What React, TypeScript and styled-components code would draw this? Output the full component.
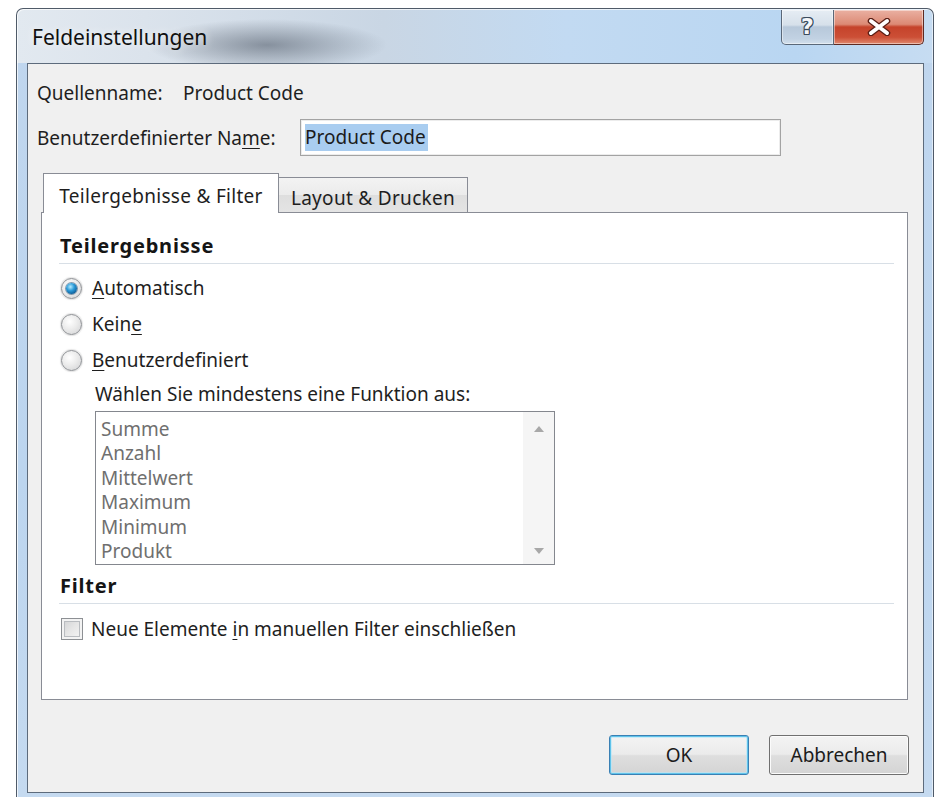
import styled, { createGlobalStyle } from 'styled-components';

const GlobalStyle = createGlobalStyle`
  html, body {
    margin: 0;
    padding: 0;
    background: #ffffff;
  }
  body {
    font-family: 'Noto Sans', 'Open Sans', sans-serif;
    font-size: 19px;
    color: #1e1e1e;
  }
  * {
    box-sizing: border-box;
  }
`;

const Desktop = styled.div`
  width: 936px;
  height: 797px;
  padding: 8px 2px 0 16px;
  overflow: hidden;
  background: #ffffff;
`;

/* Aero-Rahmen mit Glas-Titelleiste */
const Window = styled.div`
  height: 789px;
  display: flex;
  flex-direction: column;
  padding: 0 9px 4px 10px;
  border: 1px solid #4f5a68;
  border-bottom: none;
  border-radius: 7px 7px 0 0;
  background:
    radial-gradient(ellipse 120px 26px at 250px 36px, rgba(84, 94, 108, 0.6), rgba(84, 94, 108, 0)),
    linear-gradient(90deg, #e2e9f0 0%, #dbe3ec 14%, #c9d6e4 40%, #c2daf2 60%, #b9d6f2 85%, #c6dcf2 100%) top / 100% 54px no-repeat,
    linear-gradient(180deg, #c0d6ee 0%, #bcd5ef 60%, #c5daf0 100%);
  box-shadow: inset 1px 1px 0 rgba(255, 255, 255, 0.7), inset -1px 0 0 rgba(255, 255, 255, 0.5);
`;

const TitleBar = styled.div`
  height: 54px;
  display: flex;
  align-items: flex-start;
`;

const Title = styled.div`
  margin-left: 5px;
  padding-top: 15px;
  line-height: 26px;
  font-size: 21px;
  color: #101010;
  text-shadow: 0 0 8px rgba(255, 255, 255, 0.9);
`;

const CaptionButtons = styled.div`
  margin-left: auto;
  margin-top: 1px;
  display: flex;
`;

const CaptionButton = styled.div<{ $close?: boolean }>`
  width: ${(p) => (p.$close ? 90 : 53)}px;
  height: 35px;
  display: flex;
  align-items: center;
  justify-content: center;
  border: 1px solid ${(p) => (p.$close ? '#5e2a22' : '#5a6879')};
  border-top: none;
  border-left-width: ${(p) => (p.$close ? 0 : 1)}px;
  border-radius: ${(p) => (p.$close ? '0 0 5px 0' : '0 0 0 5px')};
  background: ${(p) =>
    p.$close
      ? 'linear-gradient(180deg, #eab0a2 0%, #dc8a75 42%, #c5432b 50%, #cc4f36 80%, #e08a70 100%)'
      : 'linear-gradient(180deg, #e6edf4 0%, #d6e0ea 44%, #b7c8da 50%, #c2d2e3 85%, #d3e0ec 100%)'};
  box-shadow: inset 0 0 0 1px rgba(255, 255, 255, 0.45);
`;

const HelpGlyph = styled.span`
  font-family: 'DejaVu Sans', sans-serif;
  font-weight: bold;
  font-size: 22px;
  line-height: 1;
  color: #f4f6f9;
  text-shadow:
    1px 0 0 #3b4b5e, -1px 0 0 #3b4b5e, 0 1px 0 #3b4b5e, 0 -1px 0 #3b4b5e,
    1px 1px 0 #3b4b5e, -1px -1px 0 #3b4b5e, 1px -1px 0 #3b4b5e, -1px 1px 0 #3b4b5e;
`;

const Client = styled.div`
  flex: 1;
  display: flex;
  flex-direction: column;
  padding: 17px 15px 0 9px;
  background: #f0f0f0;
  border: 1px solid #5d6b7c;
`;

const InfoRow = styled.div`
  display: flex;
  align-items: center;
  line-height: 24px;
`;

const NameRow = styled(InfoRow)`
  margin-top: 14px;
  height: 37px;
`;

const Label = styled.span<{ $width: number }>`
  width: ${(p) => p.$width}px;
  flex-shrink: 0;
  white-space: nowrap;
`;

const Mnemonic = styled.span`
  text-decoration: underline;
  text-underline-offset: 3px;
  text-decoration-thickness: 1px;
`;

const TextBox = styled.div`
  width: 481px;
  height: 37px;
  display: flex;
  align-items: center;
  padding-left: 4px;
  background: #ffffff;
  border: 1px solid #a3a3a3;
  box-shadow: inset 0 0 0 1px #ececec;
`;

const Selection = styled.span`
  height: 27px;
  line-height: 27px;
  padding-right: 2px;
  background: #a9cdf0;
  color: #1b1b1b;
`;

const TabArea = styled.div`
  margin: 17px 0 0 4px;
  display: flex;
  flex-direction: column;
`;

const TabStrip = styled.div`
  height: 39px;
  padding-left: 2px;
  display: flex;
  align-items: flex-end;
`;

const Tab = styled.div<{ $active?: boolean; $width: number }>`
  position: relative;
  z-index: ${(p) => (p.$active ? 1 : 0)};
  width: ${(p) => p.$width}px;
  height: ${(p) => (p.$active ? 40 : 35)}px;
  margin-bottom: ${(p) => (p.$active ? -1 : 0)}px;
  padding-top: ${(p) => (p.$active ? 4 : 5)}px;
  display: flex;
  align-items: center;
  justify-content: center;
  white-space: nowrap;
  letter-spacing: 0.3px;
  border: 1px solid #898c95;
  border-bottom: none;
  border-left-width: ${(p) => (p.$active ? 1 : 0)}px;
  background: ${(p) => (p.$active ? '#ffffff' : 'linear-gradient(180deg, #f3f3f3 0%, #ebebeb 50%, #dedede 51%, #e4e4e4 100%)')};
`;

const Panel = styled.div`
  height: 488px;
  padding: 20px 13px 0 17px;
  background: #ffffff;
  border: 1px solid #898c95;
`;

const Heading = styled.div`
  margin-left: 1px;
  line-height: 26px;
  font-size: 20px;
  font-weight: bold;
  letter-spacing: 0.8px;
  color: #151515;
`;

const Separator = styled.div`
  margin-top: 4px;
  border-top: 1px solid #d8dfe6;
`;

const OptionRow = styled.div`
  height: 36px;
  margin-left: 2px;
  display: flex;
  align-items: center;
  gap: 10px;
`;

const RadioGroup = styled.div`
  margin-top: 6px;
`;

const Radio = styled.span`
  width: 21px;
  height: 21px;
  flex-shrink: 0;
  display: flex;
  align-items: center;
  justify-content: center;
  border-radius: 50%;
  border: 1px solid #8d9094;
  background: radial-gradient(circle at 40% 35%, #ffffff 0%, #ececec 45%, #cfd0d2 100%);
  box-shadow: 0 0 1px 1px rgba(190, 190, 190, 0.4);
`;

const RadioDot = styled.span`
  width: 11px;
  height: 11px;
  border-radius: 50%;
  background: radial-gradient(circle at 40% 35%, #b6ecff 0%, #2b9ad8 40%, #0e5f9a 75%, #0a3f6e 100%);
  box-shadow: 0 0 0 1px rgba(20, 70, 110, 0.5);
`;

const Hint = styled.div`
  margin: 3px 0 0 36px;
  line-height: 26px;
`;

const ListBox = styled.div`
  margin: 4px 0 0 36px;
  width: 460px;
  height: 154px;
  display: flex;
  border: 1px solid #84878e;
  background: #ffffff;
`;

const ListItems = styled.div`
  flex: 1;
  padding: 5px 0 0 5px;
  line-height: 24.4px;
  color: #6f6f6f;
`;

const ScrollTrack = styled.div`
  width: 31px;
  display: flex;
  flex-direction: column;
  justify-content: space-between;
  align-items: center;
  padding: 14px 0 10px;
  background: #f5f5f5;
`;

const FilterHeading = styled(Heading)`
  margin-top: 8px;
`;

const CheckRow = styled(OptionRow)`
  margin-top: 7px;
  gap: 8px;
`;

const CheckBox = styled.span`
  width: 22px;
  height: 22px;
  flex-shrink: 0;
  border: 1px solid #8d9094;
  background: linear-gradient(135deg, #cfd0d2 0%, #e6e6e6 50%, #f6f6f6 100%);
  box-shadow: inset 0 0 0 2px #f3f3f3, inset 0 0 0 3px #b9bcc0;
`;

const ButtonRow = styled.div`
  margin: 35px -1px 0 0;
  display: flex;
  justify-content: flex-end;
  gap: 20px;
`;

const Button = styled.div<{ $default?: boolean }>`
  width: 140px;
  height: 40px;
  display: flex;
  align-items: center;
  justify-content: center;
  border: 1px solid ${(p) => (p.$default ? '#3a80b4' : '#707070')};
  border-radius: 3px;
  background: linear-gradient(180deg, #f3f3f3 0%, #ebebeb 48%, #dedede 52%, #d4d4d4 100%);
  box-shadow: ${(p) =>
    p.$default ? 'inset 0 0 0 1px #5fc3ea, inset 0 0 0 2px rgba(180, 230, 250, 0.6)' : 'inset 0 0 0 1px #fbfbfb'};
  color: #1b1b1b;
`;

const functions = ['Summe', 'Anzahl', 'Mittelwert', 'Maximum', 'Minimum', 'Produkt'];

function CloseIcon() {
  return (
    <svg width="24" height="18" viewBox="0 0 24 18">
      <path d="M4 3 L20 15 M20 3 L4 15" stroke="#5a1e15" strokeWidth="6.5" strokeLinecap="round" />
      <path d="M4 3 L20 15 M20 3 L4 15" stroke="#ffffff" strokeWidth="4" strokeLinecap="round" />
    </svg>
  );
}

function ScrollArrow({ down }: { down?: boolean }) {
  return (
    <svg width="10" height="6" viewBox="0 0 10 6">
      <path d={down ? 'M0 0 L10 0 L5 6 Z' : 'M0 6 L10 6 L5 0 Z'} fill="#a8a8a8" />
    </svg>
  );
}

export default function App() {
  return (
    <>
      <GlobalStyle />
      <Desktop>
        <Window>
          <TitleBar>
            <Title>Feldeinstellungen</Title>
            <CaptionButtons>
              <CaptionButton>
                <HelpGlyph>?</HelpGlyph>
              </CaptionButton>
              <CaptionButton $close>
                <CloseIcon />
              </CaptionButton>
            </CaptionButtons>
          </TitleBar>

          <Client>
            <InfoRow>
              <Label $width={146}>Quellenname:</Label>
              <span>Product Code</span>
            </InfoRow>
            <NameRow>
              <Label $width={263}>
                Benutzerdefinierter Na<Mnemonic>m</Mnemonic>e:
              </Label>
              <TextBox>
                <Selection>Product Code</Selection>
              </TextBox>
            </NameRow>

            <TabArea>
              <TabStrip>
                <Tab $active $width={236}>
                  Teilergebnisse &amp; Filter
                </Tab>
                <Tab $width={189}>Layout &amp; Drucken</Tab>
              </TabStrip>
              <Panel>
                <Heading>Teilergebnisse</Heading>
                <Separator />
                <RadioGroup>
                  <OptionRow>
                    <Radio>
                      <RadioDot />
                    </Radio>
                    <span>
                      <Mnemonic>A</Mnemonic>utomatisch
                    </span>
                  </OptionRow>
                  <OptionRow>
                    <Radio />
                    <span>
                      Kein<Mnemonic>e</Mnemonic>
                    </span>
                  </OptionRow>
                  <OptionRow>
                    <Radio />
                    <span>
                      <Mnemonic>B</Mnemonic>enutzerdefiniert
                    </span>
                  </OptionRow>
                </RadioGroup>
                <Hint>Wählen Sie mindestens eine Funktion aus:</Hint>
                <ListBox>
                  <ListItems>
                    {functions.map((name) => (
                      <div key={name}>{name}</div>
                    ))}
                  </ListItems>
                  <ScrollTrack>
                    <ScrollArrow />
                    <ScrollArrow down />
                  </ScrollTrack>
                </ListBox>

                <FilterHeading>Filter</FilterHeading>
                <Separator />
                <CheckRow>
                  <CheckBox />
                  <span>
                    Neue Elemente <Mnemonic>i</Mnemonic>n manuellen Filter einschließen
                  </span>
                </CheckRow>
              </Panel>
            </TabArea>

            <ButtonRow>
              <Button $default>OK</Button>
              <Button>Abbrechen</Button>
            </ButtonRow>
          </Client>
        </Window>
      </Desktop>
    </>
  );
}
